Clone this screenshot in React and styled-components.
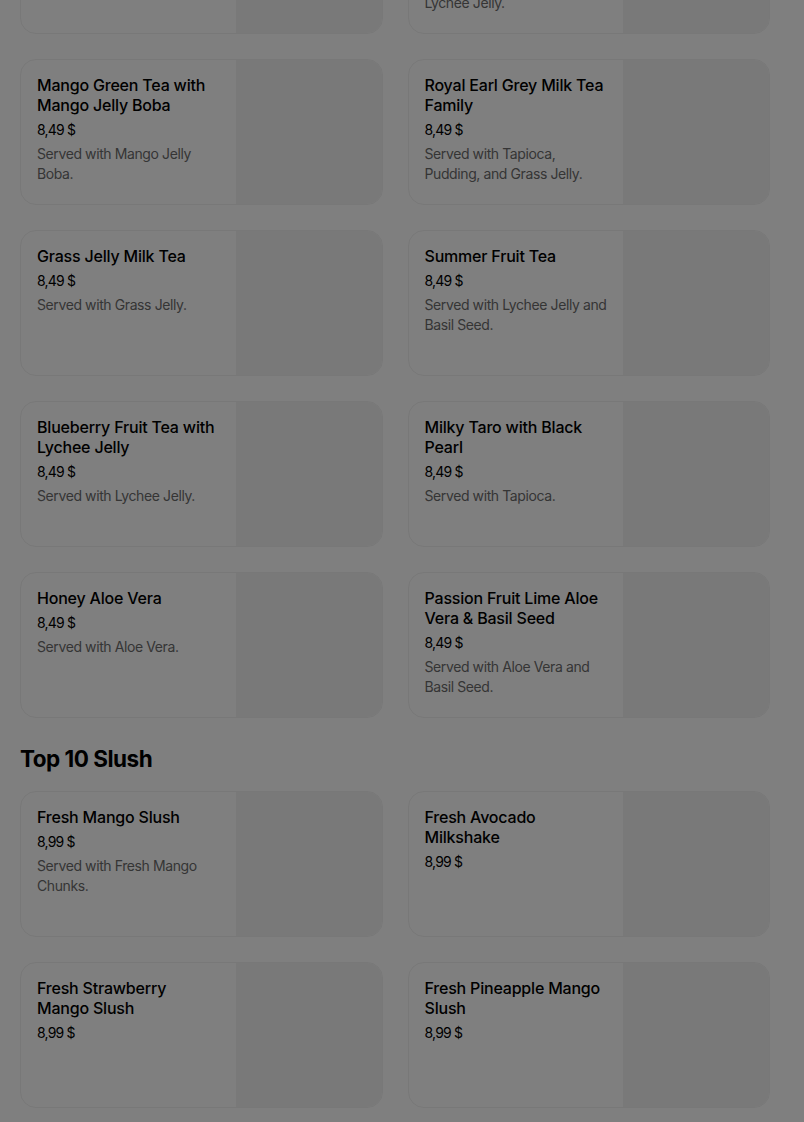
import React from "react";
import styled, { createGlobalStyle } from "styled-components";

const Global = createGlobalStyle`
  html, body { margin: 0; padding: 0; background: #ffffff; overflow: hidden; }
  body { font-family: Inter, "Noto Sans", "Liberation Sans", sans-serif; color: #000; }
`;

const Page = styled.main`
  width: 750px;
  padding: 0 20px;
  margin-top: -112px;
`;

const Section = styled.section`
  display: flex;
  flex-direction: column;
`;

const SectionTitle = styled.h2`
  margin: 25px 0 16px;
  font-size: 22.5px;
  line-height: 32px;
  font-weight: 700;
  letter-spacing: -0.5px;
  color: #000;
`;

const Grid = styled.div`
  display: grid;
  grid-template-columns: repeat(2, 1fr);
  column-gap: 25px;
  row-gap: 25px;
`;

const Card = styled.article`
  display: grid;
  grid-template-columns: 1fr 146px;
  height: 146px;
  box-sizing: border-box;
  border: 1px solid #f0f0f0;
  border-radius: 16px;
  overflow: hidden;
  background: #fff;
`;

const Info = styled.div`
  display: flex;
  flex-direction: column;
  padding: 15px 14px 16px 16px;
  min-width: 0;
`;

const Name = styled.div`
  font-size: 16px;
  line-height: 20px;
  font-weight: 500;
  letter-spacing: -0.2px;
  color: #000;
`;

const Price = styled.div`
  margin-top: 5px;
  font-size: 14px;
  line-height: 20px;
  font-weight: 400;
  letter-spacing: -0.8px;
  color: #000;
`;

const Desc = styled.div`
  margin-top: 4px;
  font-size: 14px;
  line-height: 20px;
  font-weight: 400;
  letter-spacing: -0.4px;
  color: #6b6b6b;
`;

const Thumb = styled.div`
  background: #f3f3f3;
`;

const Backdrop = styled.div`
  position: fixed;
  inset: 0;
  background: rgba(0, 0, 0, 0.5);
  pointer-events: none;
`;

const teas = [
  { name: "Passion Fruit Green Tea", price: "8,49 $", desc: "Served with Passion Fruit Jelly." },
  { name: "Lychee Black Tea with Aloe Vera", price: "8,49 $", desc: "Served with Aloe Vera and Lychee Jelly." },
  { name: "Mango Green Tea with Mango Jelly Boba", price: "8,49 $", desc: "Served with Mango Jelly Boba." },
  { name: "Royal Earl Grey Milk Tea Family", price: "8,49 $", desc: "Served with Tapioca, Pudding, and Grass Jelly." },
  { name: "Grass Jelly Milk Tea", price: "8,49 $", desc: "Served with Grass Jelly." },
  { name: "Summer Fruit Tea", price: "8,49 $", desc: "Served with Lychee Jelly and Basil Seed." },
  { name: "Blueberry Fruit Tea with Lychee Jelly", price: "8,49 $", desc: "Served with Lychee Jelly." },
  { name: "Milky Taro with Black Pearl", price: "8,49 $", desc: "Served with Tapioca." },
  { name: "Honey Aloe Vera", price: "8,49 $", desc: "Served with Aloe Vera." },
  { name: "Passion Fruit Lime Aloe Vera & Basil Seed", price: "8,49 $", desc: "Served with Aloe Vera and Basil Seed." },
];

const slush = [
  { name: "Fresh Mango Slush", price: "8,99 $", desc: "Served with Fresh Mango Chunks." },
  { name: "Fresh Avocado Milkshake", price: "8,99 $" },
  { name: "Fresh Strawberry Mango Slush", price: "8,99 $" },
  { name: "Fresh Pineapple Mango Slush", price: "8,99 $" },
];

function Item({ item }) {
  return (
    <Card>
      <Info>
        <Name>{item.name}</Name>
        <Price>{item.price}</Price>
        {item.desc && <Desc>{item.desc}</Desc>}
      </Info>
      <Thumb />
    </Card>
  );
}

export default function App() {
  return (
    <>
      <Global />
      <Page>
        <Section>
          <Grid>
            {teas.map((t) => (
              <Item key={t.name} item={t} />
            ))}
          </Grid>
        </Section>
        <Section>
          <SectionTitle>Top 10 Slush</SectionTitle>
          <Grid>
            {slush.map((t) => (
              <Item key={t.name} item={t} />
            ))}
          </Grid>
        </Section>
      </Page>
      <Backdrop />
    </>
  );
}
